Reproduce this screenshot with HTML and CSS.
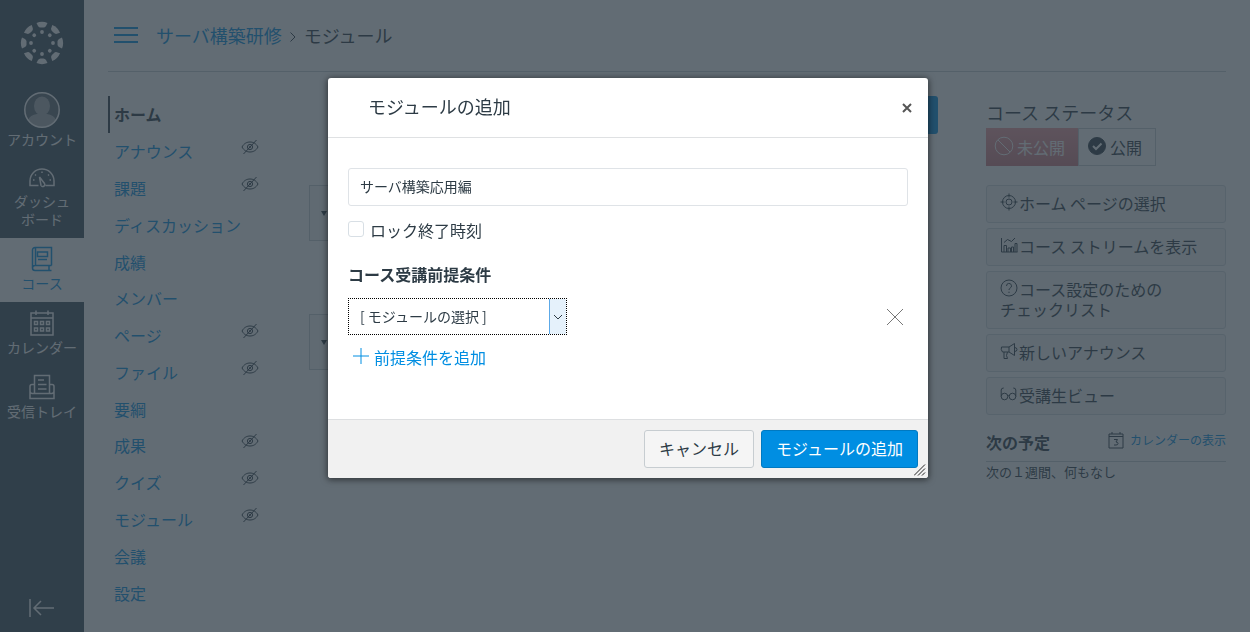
FILE: index.html
```html
<!DOCTYPE html>
<html lang="ja">
<head>
<meta charset="utf-8">
<meta name="viewport" content="width=device-width, initial-scale=1">
<title>モジュール</title>
<link rel="stylesheet" href="styles.css">
</head>
<body>
<svg class="defs" aria-hidden="true">
  <symbol id="eye-off" viewBox="0 0 18 16">
    <path d="M1 8C3 4.300 6 3 9 3s6 1.300 8 5c-2 3.700-5 5-8 5S3 11.700 1 8z"/>
    <circle cx="9" cy="8" r="2.600"/><path d="M2.500 15L15.500 1"/><circle cx="9" cy="8" r=".6"/>
  </symbol>
</svg>
<div class="app">
  <header class="global-nav">
    <a class="logo" href="#" aria-label="ダッシュボードへ">
      <svg viewBox="0 0 44 44" width="44" height="44">
        <g id="petal"><path d="M16.500 2Q22-.3 27.500 2L26 5Q25 6.500 23.500 6.500h-3Q19 6.500 18 5z"/><circle cx="22" cy="11" r="1.900"/></g>
        <use href="#petal" transform="rotate(45 22 22)"/><use href="#petal" transform="rotate(90 22 22)"/><use href="#petal" transform="rotate(135 22 22)"/><use href="#petal" transform="rotate(180 22 22)"/><use href="#petal" transform="rotate(225 22 22)"/><use href="#petal" transform="rotate(270 22 22)"/><use href="#petal" transform="rotate(315 22 22)"/>
      </svg>
    </a>
    <nav class="global-menu" aria-label="グローバル">
      <a class="global-item account" href="#">
        <svg viewBox="0 0 36 36" width="36" height="36"><circle cx="18" cy="18" r="17.200" fill="#5b6770"/><path d="M4 28Q6 23 13 22h10q7 1 9 6-5 7.200-14 7.200T4 28z" fill="#a9adb0"/><ellipse cx="18" cy="14" rx="8" ry="9.500" fill="#a9adb0"/><circle cx="18" cy="18" r="17.200" fill="none" stroke="#fff" stroke-width="1.500"/></svg>
        <span>アカウント</span>
      </a>
      <a class="global-item dashboard" href="#">
        <svg class="line" viewBox="0 0 26 20" width="26" height="20"><path d="M9.500 17.500H1V13a12 12 0 0 1 24 0v4.500h-8.500M10.500 9l5 6.500a2 2 0 0 1-3.500 2z"/><path d="M13 3.500v1.500M6 6.500l1 1M20 6.500l-1 1M4 12h1.500M20.500 12H22"/></svg>
        <span>ダッシュ<br>ボード</span>
      </a>
      <a class="global-item courses active" href="#">
        <svg class="line" viewBox="0 0 22 26" width="22" height="26"><path d="M20.500 19.500H4a2.500 2.500 0 0 0 0 5h16.500M20.500 19.500V1.500H4a2.500 2.500 0 0 0-2.500 2.500v18M4.500 2v17M6.500 6h10v4.500h-10zM7 13.500h9M18 20v4"/></svg>
        <span>コース</span>
      </a>
      <a class="global-item calendar" href="#">
        <svg class="line" viewBox="0 0 24 26" width="24" height="26"><path d="M1 3h22v22H1zM1 8h22M6 .5V5M18 .5V5"/><path d="M4.500 11.500h3v3h-3zM10.500 11.500h3v3h-3zM16.500 11.500h3v3h-3zM4.500 18h3v3h-3zM10.500 18h3v3h-3zM16.500 18h3v3h-3z"/></svg>
        <span>カレンダー</span>
      </a>
      <a class="global-item inbox" href="#">
        <svg class="line" viewBox="0 0 26 26" width="26" height="26"><path d="M5.500 19V1.500h15V19M5.500 10.500H3q-2 0-2 2V24.500h24V12.500q0-2-2-2h-2.500M1 17.500q.5 2 2 2h20q1.500 0 2-2M9 6h6M9 10.500h8.500M9 15h8.500"/></svg>
        <span>受信トレイ</span>
      </a>
    </nav>
    <button class="collapse" type="button" aria-label="ナビゲーションを縮小">
      <svg class="line" viewBox="0 0 26 20" width="26" height="20"><path d="M1 1v18M25 10H5M12 3L5 10l7 7"/></svg>
    </button>
  </header>

  <div class="page">
    <div class="topbar">
      <button class="burger" type="button" aria-label="コースメニュー"><i></i><i></i><i></i></button>
      <nav class="crumbs" aria-label="パンくず">
        <a href="#">サーバ構築研修</a>
        <svg viewBox="0 0 6 10" width="6" height="10"><path d="M.5 .5L5 5 .5 9.500"/></svg>
        <span>モジュール</span>
      </nav>
    </div>
    <div class="columns">
      <nav class="course-menu" aria-label="コース">
        <a class="current" href="#">ホーム</a>
        <a href="#">アナウンス<svg><use href="#eye-off"/></svg></a>
        <a href="#">課題<svg><use href="#eye-off"/></svg></a>
        <a href="#">ディスカッション</a>
        <a href="#">成績</a>
        <a href="#">メンバー</a>
        <a href="#">ページ<svg><use href="#eye-off"/></svg></a>
        <a href="#">ファイル<svg><use href="#eye-off"/></svg></a>
        <a href="#">要綱</a>
        <a href="#">成果<svg><use href="#eye-off"/></svg></a>
        <a href="#">クイズ<svg><use href="#eye-off"/></svg></a>
        <a href="#">モジュール<svg><use href="#eye-off"/></svg></a>
        <a href="#">会議</a>
        <a href="#">設定</a>
      </nav>
      <main class="modules">
        <div class="toolbar"><button class="add-module" type="button" aria-label="モジュールを追加"></button></div>
        <section class="module"><span class="caret"></span></section>
        <section class="module"><span class="caret"></span></section>
      </main>
      <aside class="side">
        <h2 class="status-title">コース ステータス</h2>
        <div class="status">
          <button class="unpublished" type="button"><svg viewBox="0 0 20 20" width="20" height="20"><circle cx="10" cy="10" r="8.800"/><path d="M4 4l12 12"/></svg>未公開</button>
          <button class="published" type="button"><svg viewBox="0 0 20 20" width="20" height="20"><circle cx="10" cy="10" r="8.500" fill="#2d3b45"/><path d="M6 10l3 3 5.500-5.500" stroke="#fff" stroke-width="2"/></svg>公開</button>
        </div>
        <div class="actions">
          <button type="button"><svg viewBox="0 0 18 18"><circle cx="9" cy="9" r="6.500"/><circle cx="9" cy="9" r="3"/><path d="M9 .5v4M9 13.500v4M.5 9h4M13.500 9h4"/></svg>ホーム ページの選択</button>
          <button type="button"><svg viewBox="0 0 18 18"><path d="M1.500 2v14H17.500M4 16V9.500h2.500V16M8 16v-4h2.500v4M11.500 16v-5h2v5M15 16V7.500h2V16M4 6.500l3.500-3 4 2 3.500-3.500"/></svg>コース ストリームを表示</button>
          <button type="button"><svg viewBox="0 0 18 18"><circle cx="9" cy="9" r="8"/><path d="M6.500 7a2.500 2.500 0 1 1 3.500 2.200Q9 9.700 9 11M9 12.700v1.300"/></svg>コース設定のための<br>チェックリスト</button>
          <button type="button"><svg viewBox="0 0 18 18"><path d="M1.500 5H9l5.500-3.500v12L9 10H2.500Q.5 7.500 1.500 5zM4 10v6.500h3.500L6.500 13.500l1-3.500M9 5v5M14.500 5.500q2.500 0 2.500 2t-2.500 2"/></svg>新しいアナウンス</button>
          <button type="button"><svg viewBox="0 0 18 18"><circle cx="4.500" cy="11.500" r="3.300"/><circle cx="12.500" cy="11.500" r="3.300"/><path d="M7.800 11q.7-.8 1.400 0M1.200 11.500V5q0-2 2.500-2M15.800 11.500V5q0-2-2.500-2"/></svg>受講生ビュー</button>
        </div>
        <div class="upcoming">
          <h2>次の予定</h2>
          <a href="#"><svg viewBox="0 0 16 18" width="16" height="18"><path d="M1 3h14v14H1zM1 5.500h14M4 1v2M12 1v2M6 8.500h3.500L8 11q2 0 2 1.500T8 14H6"/></svg>カレンダーの表示</a>
        </div>
        <p class="nothing">次の１週間、何もなし</p>
      </aside>
    </div>
  </div>
</div>

<div class="overlay">
  <form class="dialog" role="dialog" aria-modal="true" aria-labelledby="dialog-title">
    <div class="dialog-head">
      <h2 id="dialog-title">モジュールの追加</h2>
      <button type="button" aria-label="閉じる"><svg viewBox="0 0 10 10" width="10" height="10"><path d="M1 1l8 8M9 1L1 9"/></svg></button>
    </div>
    <div class="dialog-body">
      <input class="name" type="text" value="サーバ構築応用編" aria-label="モジュール名">
      <label class="lock"><input type="checkbox">ロック終了時刻</label>
      <h3>コース受講前提条件</h3>
      <div class="prereq">
        <div class="picker">
          <select aria-label="前提条件"><option>[ モジュールの選択 ]</option></select>
          <span class="arrow"><svg viewBox="0 0 10 6" width="10" height="6"><path d="M1 1l4 4 4-4"/></svg></span>
        </div>
        <button type="button" aria-label="削除"><svg viewBox="0 0 16 16" width="16" height="16"><path d="M0 0l16 16M16 0L0 16"/></svg></button>
      </div>
      <a class="add-prereq" href="#"><svg viewBox="0 0 16 16" width="16" height="16"><path d="M8 0v16M0 8h16"/></svg>前提条件を追加</a>
    </div>
    <div class="dialog-foot">
      <button class="cancel" type="button">キャンセル</button>
      <button class="submit" type="submit">モジュールの追加</button>
      <svg class="grip" viewBox="0 0 12 12" width="12" height="12"><path d="M0 11.500L11 .5M4 11.500l7-7M8 11.500l3-3"/></svg>
    </div>
  </form>
</div>
</body>
</html>
```
FILE: styles.css
```css
* { box-sizing: border-box; }

body {
  margin: 0;
  background: #fff;
  color: #2d3b45;
  font: 16px/20px "Noto Sans CJK JP", "Liberation Sans", sans-serif;
}

a { color: #008ee2; text-decoration: none; }
button { font: inherit; color: inherit; background: none; border: 0; padding: 0; }
h2, h3, p { margin: 0; font-size: 16px; }
svg { fill: none; stroke: currentColor; flex: none; }
.defs { display: none; }

.app { display: flex; min-height: 100vh; }

/* Global navigation */
.global-nav {
  display: flex;
  flex-direction: column;
  flex: none;
  width: 84px;
  background: #394b58;
  color: #fff;
}
.logo { display: flex; justify-content: center; padding: 21px 0 25px; color: #fff; }
.logo svg { fill: currentColor; stroke: none; }
.global-item {
  display: flex;
  flex-direction: column;
  align-items: center;
  color: #fff;
  font-size: 14px;
  line-height: 18px;
  text-align: center;
  white-space: nowrap;
}
.line { stroke-width: 1.5; }
.account { padding: 2px 0 12px; gap: 2px; }
.account svg { stroke: none; }
.dashboard { padding: 8px 0 10px; gap: 4px; }
.courses, .calendar, .inbox { padding: 8px 0; gap: 2px; min-height: 64px; }
.active { background: #fff; color: #008ee2; }
.collapse { margin-top: auto; padding: 14px 0; line-height: 0; }

/* Page header */
.page { flex: 1; display: flex; flex-direction: column; padding: 0 24px 21px; min-width: 0; }
.topbar {
  display: flex;
  align-items: center;
  gap: 18px;
  height: 72px;
  padding: 0 0 2px 6px;
  border-bottom: 1px solid #c7cdd1;
}
.burger { display: grid; gap: 5px; width: 24px; }
.burger i { height: 2px; background: #008ee2; }
.crumbs { display: flex; align-items: center; gap: 8px; font-size: 18px; }
.crumbs svg { margin-top: 4px; }

/* Course columns */
.columns { flex: 1; display: flex; padding-top: 24px; }
.course-menu { display: flex; flex-direction: column; width: 153px; margin-right: 48px; }
.course-menu a {
  flex: 1;
  display: flex;
  align-items: center;
  justify-content: space-between;
  padding: 0 2px 0 6px;
  white-space: nowrap;
}
.course-menu .current { color: #2d3b45; font-weight: 700; border-left: 2px solid #2d3b45; padding-left: 4px; }
.course-menu svg { width: 18px; height: 16px; margin-bottom: 8px; color: #2d3b45; }

.modules { flex: 1; min-width: 0; }
.toolbar { display: flex; justify-content: flex-end; margin-bottom: 51px; }
.add-module { width: 120px; height: 38px; border-radius: 3px; background: #008ee2; }
.module {
  display: flex;
  align-items: center;
  height: 56px;
  margin: 0 24px 73px 0;
  padding-left: 11px;
  background: #f5f5f5;
  border: 1px solid #c7cdd1;
}
.caret { border: 3px solid transparent; border-top: 5px solid #2d3b45; border-bottom: 0; }

.side { width: 240px; margin-left: 48px; }
.status-title { font-size: 18px; font-weight: 400; line-height: 32px; }
.status { display: flex; margin-bottom: 19px; }
.status button { display: flex; align-items: center; height: 38px; gap: 3px; padding: 0 13px 0 8px; }
.status svg { margin-bottom: 2px; }
.unpublished { background: linear-gradient(#ee9ca1, #cc7c83); color: #fff; }
.published { border: 1px solid #c7cdd1; }

.actions { display: grid; gap: 5px; }
.actions button {
  padding: 7px 13px 9px;
  text-align: left;
  background: #f5f5f5;
  border: 1px solid #d4dade;
  border-radius: 3px;
}
.actions svg { width: 18px; height: 18px; margin-right: 1px; vertical-align: -1px; }
.upcoming {
  display: flex;
  align-items: center;
  justify-content: space-between;
  margin-top: 14px;
  padding-bottom: 6px;
  line-height: 26px;
  border-bottom: 1px solid #c7cdd1;
}
.upcoming a { display: flex; align-items: center; gap: 6px; padding-bottom: 4px; font-size: 12px; line-height: 20px; }
.upcoming svg { color: #2d3b45; }
.nothing { font-size: 13px; }

/* Dialog */
.overlay {
  position: fixed;
  inset: 0;
  display: flex;
  justify-content: center;
  align-items: flex-start;
  padding: 78px 0 0 6px;
  background: rgba(45, 59, 69, .75);
}
.dialog { width: 600px; background: #fff; border-radius: 3px; box-shadow: 0 1px 6px 1px rgba(0, 0, 0, .5); }
.dialog-head {
  display: flex;
  align-items: center;
  justify-content: space-between;
  height: 60px;
  padding: 0 16px 0 40px;
  border-bottom: 1px solid #dfe1e3;
}
.dialog-head h2 { padding-bottom: 4px; font-size: 18px; font-weight: 400; }
.dialog-head svg { display: block; stroke-width: 2; color: #555; }
.dialog-body { display: flex; flex-direction: column; align-items: flex-start; padding: 30px 20px 52px; }
.name {
  width: 100%;
  height: 38px;
  padding: 0 11px 2px;
  font: inherit;
  font-size: 14px;
  color: inherit;
  border: 1px solid #dfe3e7;
  border-radius: 3px;
}
.lock { display: flex; align-items: center; gap: 6px; margin: 14px 0 24px; }
.lock input {
  appearance: none;
  width: 16px;
  height: 16px;
  margin: 0 0 2px;
  border: 1px solid #d8dfe5;
  border-radius: 3px;
}
.prereq { display: flex; align-items: center; justify-content: space-between; width: 100%; margin: 14px 0 12px; padding-right: 5px; }
.prereq button { line-height: 0; color: #777; }
.picker { display: flex; width: 219px; height: 37px; border: 1px dotted #000; }
.picker select {
  appearance: none;
  flex: 1;
  padding: 0 11px 2px;
  font: inherit;
  font-size: 14px;
  color: inherit;
  background: #fff;
  border: 0;
}
.arrow { display: grid; place-items: center; width: 17px; background: #e5f1fb; border-left: 1px solid #5ca9e8; }
.add-prereq { display: flex; align-items: center; gap: 5px; padding-left: 5px; }
.add-prereq svg { margin-bottom: 2px; }
.dialog-foot {
  position: relative;
  display: flex;
  justify-content: flex-end;
  gap: 7px;
  padding: 10px;
  background: #f1f1f1;
  border-top: 1px solid #dddfe1;
  border-radius: 0 0 3px 3px;
}
.dialog-foot button { height: 38px; padding: 0 14px 2px; border: 1px solid #c7cdd1; border-radius: 3px; background: #f5f5f5; }
.dialog-foot .submit { color: #fff; background: #008ee2; border-color: #0079c1; }
.grip { position: absolute; right: 2px; bottom: 2px; color: #222; }
```
